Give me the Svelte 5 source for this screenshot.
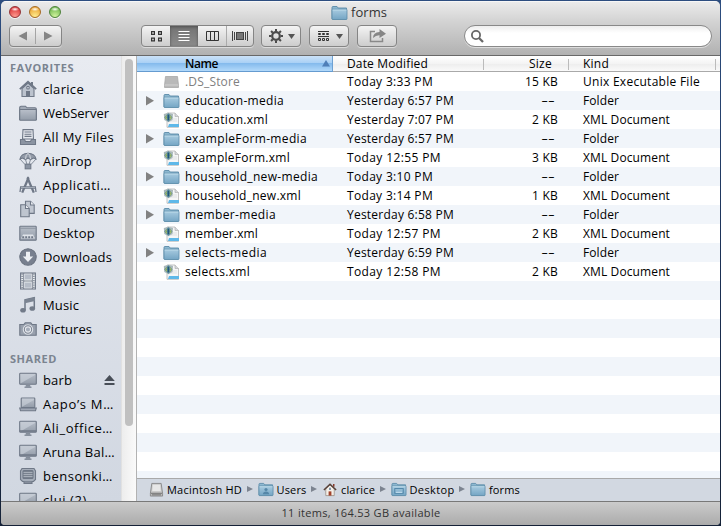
<script>
  const favorites = [
    ['clarice', 'home', 41], ['WebServer', 'folder', 66], ['All My Files', 'files', 71],
    ['AirDrop', 'airdrop', 49], ['Applicati…', 'apps', 68], ['Documents', 'docs', 71],
    ['Desktop', 'desktop', 52], ['Downloads', 'download', 69], ['Movies', 'movies', 43],
    ['Music', 'music', 36], ['Pictures', 'pictures', 49]
  ];
  const shared = [
    ['barb', 'display', 29], ['Aapo’s M…', 'laptop', 71], ['Ali_office…', 'imac', 70],
    ['Aruna Bal…', 'imac', 72], ['bensonki…', 'crt', 70], ['clui (2)', 'display', 44]
  ];
  const files = [
    ['.DS_Store', 55, 'Today 3:33 PM', 86, '15 KB', 33, 'Unix Executable File', 117],
    ['education-media', 99, 'Yesterday 6:57 PM', 107, '--', 14, 'Folder', 36],
    ['education.xml', 83, 'Yesterday 7:07 PM', 107, '2 KB', 26, 'XML Document', 87],
    ['exampleForm-media', 122, 'Yesterday 6:57 PM', 107, '--', 14, 'Folder', 36],
    ['exampleForm.xml', 105, 'Today 12:55 PM', 94, '3 KB', 26, 'XML Document', 87],
    ['household_new-media', 133, 'Today 3:10 PM', 86, '--', 14, 'Folder', 36],
    ['household_new.xml', 116, 'Today 3:14 PM', 86, '1 KB', 26, 'XML Document', 87],
    ['member-media', 91, 'Yesterday 6:58 PM', 107, '--', 14, 'Folder', 36],
    ['member.xml', 73, 'Today 12:57 PM', 94, '2 KB', 26, 'XML Document', 87],
    ['selects-media', 82, 'Yesterday 6:59 PM', 107, '--', 14, 'Folder', 36],
    ['selects.xml', 65, 'Today 12:58 PM', 94, '2 KB', 26, 'XML Document', 87]
  ];
  const blanks = Array.from({ length: 11 });
  const path = [['Macintosh HD', 'hd', 75], ['Users', 'users', 30], ['clarice', 'house', 34], ['Desktop', 'desk', 45], ['forms', 'plain', 31]];

  // Tracks a label in or out so that it fills its intended width.
  function fit(node, width) {
    const natural = node.getBoundingClientRect().width;
    node.style.letterSpacing = `${(width - natural) / node.textContent.length}px`;
  }
</script>

{#snippet blueFolder(kind)}
  <svg class="bf" viewBox="0 0 17 16">
    <path d="M1 14V2.5Q1 1.5 2 1.5H6L7.2 3H15.5V14Z" fill="#8db8d0" stroke="#5b8ba8" stroke-width=".9" />
    <rect x="1" y="4.2" width="15" height="10.3" rx=".7" fill="url(#blue)" stroke="#5b8ba8" stroke-width=".8" />
    <path d="M1.6 5H15.4" stroke="#c5e1ef" stroke-width=".8" />
    {#if kind === 'users'}<circle cx="8.5" cy="8" r="1.7" fill="#5587a8" /><path d="M5.2 13Q5.5 10 8.5 10T11.8 13Z" fill="#5587a8" />{/if}
    {#if kind === 'desk'}<rect x="4" y="7" width="9" height="5" fill="none" stroke="#4d83a6" /><path d="M5 11H12" stroke="#d0e8f5" />{/if}
  </svg>
{/snippet}

{#snippet sideIcon(kind)}
  <svg class="si" viewBox="0 0 18 18" fill="none" stroke="#6f7887" stroke-width="1.1">
    {#if kind === 'home'}
      <path d="M3 8.5V16.5H15V8.5L9 3Z" fill="#bcc3ce" /><path d="M.8 9.2 9 1.8l8.2 7.4" stroke-width="1.8" /><path d="M13 2v4" stroke-width="2" />
      <circle cx="9" cy="7.7" r="1.3" fill="#eef0f4" /><rect x="7" y="11" width="4" height="5.5" fill="#6f7887" stroke="none" />
    {:else if kind === 'folder'}
      <path d="M.7 15.5V3.5Q.7 2.2 2 2.2H6.5L8 3.8H16Q17.3 3.8 17.3 5V15.5Z" fill="#a3abb7" /><rect x=".7" y="5.5" width="16.6" height="10.8" rx=".6" fill="url(#gray)" />
    {:else if kind === 'files'}
      <path d="M3.5 11 4 1.6H14L14.5 11Z" fill="#e6e9ee" /><path d="M5.5 4H12.5M5.5 6.2H12.5M5.5 8.4H12.5" /><path d="M1.5 11.5H5.5L6.5 13.5H11.5L12.5 11.5H16.5V16.5H1.5Z" fill="#8b94a2" />
    {:else if kind === 'airdrop'}
      <path d="M1 7Q2 1.5 9 1.2 16 1.5 17 7L14.5 6 11.5 7.5 9 6 6.5 7.5 3.5 6Z" fill="#929aa7" /><path d="M6.5 7.2Q6.5 3 9 1.2 11.5 3 11.5 7.2" stroke="#e6e9ee" stroke-width=".8" /><path d="M1 7 6 12.5M6.5 7.5 8 12.5M11.5 7.5 10 12.5M17 7 12 12.5" stroke-width=".8" /><rect x="6.2" y="12.2" width="5.6" height="4.6" fill="#8b94a2" />
    {:else if kind === 'apps'}
      <path d="M1 16 1.6 11.5M17 16 16.4 11.5" stroke-width="1.3" /><path d="M3.2 16.6 9 3 14.8 16.6" stroke-width="2.3" /><path d="M1 11.5H17" stroke-width="2.4" /><path d="M2 11.5H16" stroke="#bac1cb" stroke-width=".7" /><circle cx="9" cy="2.5" r="1.4" fill="#6f7887" stroke="none" />
    {:else if kind === 'docs'}
      <path d="M6.5 1.2H11.5L15.2 5V13.4H6.5Z" fill="#c1c7d1" /><path d="M11.5 1.2V5H15.2" fill="#eceff3" /><path d="M1.7 4.7H6.5L10.2 8.5V16.8H1.7Z" fill="#bec5cf" /><path d="M6.5 4.7V8.5H10.2" fill="#f0f2f5" />
    {:else if kind === 'desktop'}
      <rect x=".8" y="2.3" width="16.4" height="14" rx=".6" fill="url(#gray)" /><path d="M1 4.2H17" stroke="#8d95a1" /><path d="M4 10.5H14L16 14.5H2Z" fill="#dfe3e9" stroke="none" /><path d="M3.2 13.2H14.8" stroke-width="2" stroke-dasharray="2 1" />
    {:else if kind === 'download'}
      <circle cx="9" cy="9" r="8.2" fill="#78808f" stroke="#69717f" /><path d="M7 3.8H11V8.5H14.2L9 14 3.8 8.5H7Z" fill="#edf0f4" stroke="none" />
    {:else if kind === 'movies'}
      <rect x="1.6" y="1" width="14.8" height="16" fill="#edf0f3" /><path d="M3.1 1.5V17M14.9 1.5V17" stroke-width="1.3" stroke-dasharray="1.2 1" /><path d="M4.7 1V17M13.3 1V17M4.7 9H13.3" stroke-width=".9" /><rect x="5.8" y="2.3" width="6.4" height="5.2" fill="#b6bdc8" stroke="none" /><rect x="5.8" y="10.5" width="6.4" height="5.2" fill="#b6bdc8" stroke="none" />
    {:else if kind === 'music'}
      <path d="M6 14V3.8L15.3 1.8V12.5" stroke-width="1.5" /><path d="M6 3.4 16 1.2V5L6 7.2Z" fill="#7b8492" stroke="none" /><ellipse cx="4" cy="14.3" rx="2.8" ry="2.3" fill="#727b89" stroke="none" /><ellipse cx="13.3" cy="12.5" rx="2.8" ry="2.3" fill="#727b89" stroke="none" />
    {:else if kind === 'pictures'}
      <path d="M.8 4.5H4.8L6.2 2.8H11.8L13.2 4.5H17.2V15.3H.8Z" fill="#98a0ad" /><circle cx="9" cy="9.5" r="4.7" fill="#7b8391" stroke="#dce0e6" /><circle cx="9" cy="9.5" r="2.6" fill="#a5adba" stroke="#e5e8ed" />
    {:else if kind === 'laptop'}
      <rect x="2.2" y="3" width="13.6" height="9.6" rx=".7" fill="url(#gray)" /><path d="M3 11.8 15 5V3.6H3Z" fill="#ccd2db" stroke="none" opacity=".6" /><path d="M.7 13H17.3L16.5 15.7H1.5Z" fill="#9fa7b4" />
    {:else if kind === 'crt'}
      <path d="M3 1.5H15L16.5 4V12.5L14.5 14.5H3.5L1.5 12.5V4Z" fill="#a5adb9" /><rect x="4" y="3.5" width="10" height="8" rx="1" fill="#79828f" /><path d="M4.5 5.5H13.5M4.5 7.5H13.5M4.5 9.5H13.5" stroke="#c6ccd5" stroke-width=".6" /><path d="M5 14.5V16.4H13V14.5" fill="#8e96a3" />
    {:else}
      <rect x=".7" y="2.2" width="16.6" height="11" rx=".8" fill="url(#gray)" /><path d="M1.4 12.4 16 4V2.9H1.4Z" fill="#cdd3dc" stroke="none" opacity=".65" />
      {#if kind === 'imac'}<path d="M.7 12H17.3" stroke-width="1.5" />{/if}
      <path d="M7 13.5H11L11.5 15.7H6.5Z" fill="#858e9b" stroke="none" /><path d="M5.5 16.2H12.5" />
    {/if}
  </svg>
{/snippet}

{#snippet houseIcon()}
  <svg class="bf" viewBox="0 0 17 16"><path d="M4 7V14.5H13V7L8.5 3Z" fill="#f4efe8" stroke="#8b7d72" stroke-width=".7" /><path d="M12.5 2V5" stroke="#8a3c2d" stroke-width="1.6" /><path d="M2 8.5 8.5 2.4 15 8.5" fill="none" stroke="#574139" stroke-width="1.7" /><path d="M7 10H10V14.5H7Z" fill="#a0422b" /><path d="M8.5 6.2V8.5" stroke="#4c7393" stroke-width="1.5" /></svg>
{/snippet}

<svg class="defs" width="0" height="0">
  <defs>
    <linearGradient id="blue" x2="0" y2="1"><stop stop-color="#a8cbe0" /><stop offset="1" stop-color="#74a5c4" /></linearGradient>
    <linearGradient id="gray" x2="0" y2="1"><stop stop-color="#b9c0ca" /><stop offset="1" stop-color="#929ba8" /></linearGradient>
  </defs>
</svg>

<div class="screen">
  <div class="window">
    <header>
      <div class="titlebar">
        <div class="lights"><i class="red"></i><i class="amber"></i><i class="green"></i></div>
        <div class="title">{@render blueFolder()}<span use:fit={36}>forms</span></div>
      </div>
      <div class="tools">
        <div class="btn nav">
          <svg viewBox="0 0 51 20"><path d="M17 5.5V14.5L8.5 10ZM34 5.5V14.5L42.5 10Z" fill="#858585" /><path d="M25.5 2V18" stroke="#a4a4a4" /></svg>
        </div>
        <div class="btn views">
          <div><svg viewBox="0 0 28 20" fill="none" stroke="#333" stroke-width="1.2"><path d="M9.6 5.6H12.4V8.4H9.6ZM16.6 5.6H19.4V8.4H16.6ZM9.6 12.1H12.4V14.9H9.6ZM16.6 12.1H19.4V14.9H16.6Z" /></svg></div>
          <div class="on"><svg viewBox="0 0 28 20" stroke="#fff"><path d="M8.5 5.5H19.5M8.5 8.5H19.5M8.5 11.5H19.5M8.5 14.5H19.5" /></svg></div>
          <div><svg viewBox="0 0 28 20" fill="none" stroke="#333"><path d="M8.5 5.5H20.5V14.5H8.5ZM12.5 5.5V14.5M16.5 5.5V14.5" /></svg></div>
          <div class="flow"><svg viewBox="0 0 28 20" fill="none" stroke="#444"><rect x="9.5" y="6.5" width="7" height="7" fill="#777" /><path d="M5.5 5V15M7.5 6V14M18.5 6V14M20.5 5V15" /></svg></div>
        </div>
        <div class="btn gear">
          <svg viewBox="0 0 38 20"><circle cx="14" cy="10" r="3.8" fill="none" stroke="#4c4c4c" stroke-width="2.2" /><path d="M14 3V5.4M14 14.6V17M7 10H9.4M18.6 10H21M9.05 5.05 10.8 6.8M17.2 13.2 18.95 14.95M9.05 14.95 10.8 13.2M17.2 6.8 18.95 5.05" stroke="#4c4c4c" stroke-width="2" /><path d="M26 8H33L29.5 13Z" fill="#555" /></svg>
        </div>
        <div class="btn arrange">
          <svg viewBox="0 0 38 20" fill="none" stroke="#333"><path d="M8 5.5H19M8 10.5H19" /><path d="M8.5 7.5H10.5V8.5H8.5ZM12.5 7.5H14.5V8.5H12.5ZM16.5 7.5H18.5V8.5H16.5ZM8.5 12.5H10.5V14.5H8.5ZM12.5 12.5H14.5V14.5H12.5ZM16.5 12.5H18.5V14.5H16.5Z" /><path d="M26 8H33L29.5 13Z" fill="#555" stroke="none" /></svg>
        </div>
        <div class="btn share">
          <svg viewBox="0 0 38 20"><path d="M17 5.5H12.5V15.5H24.5V12" fill="none" stroke="#898989" stroke-width="1.5" /><path d="M15 12Q15 6.3 21.5 6V3L28 7.8 21.5 12V9.2Q18 9 15 12Z" fill="#868686" /></svg>
        </div>
        <div class="search"><svg viewBox="0 0 20 20" fill="none" stroke="#686868"><circle cx="9" cy="9" r="4.1" stroke-width="1.8" /><path d="M12 12 16 16" stroke-width="2.3" /></svg></div>
      </div>
    </header>

    <main>
      <aside>
        <nav>
          <h2 class="first"><span use:fit={64}>FAVORITES</span></h2>
          {#each favorites as [label, icon, width]}
            <div class="place">{@render sideIcon(icon)}<span use:fit={width}>{label}</span></div>
          {/each}
          <h2><span use:fit={47}>SHARED</span></h2>
          {#each shared as [label, icon, width]}
            <div class="place">{@render sideIcon(icon)}<span use:fit={width}>{label}</span>
              {#if label === 'barb'}<svg class="eject" viewBox="0 0 11 11" fill="#484e57"><path d="M5.5 0 10.8 6H.2ZM.5 8H10.5V10H.5Z" /></svg>{/if}
            </div>
          {/each}
        </nav>
        <div class="gutter"><div class="thumb"></div></div>
      </aside>

      <section>
        <div class="heads">
          <div class="name"><b use:fit={33}>Name</b><svg viewBox="0 0 8 7"><path d="M4 0 8 6.5H0Z" fill="#4f7fb8" /></svg></div>
          <div class="date"><span use:fit={81}>Date Modified</span></div>
          <div class="size"><span use:fit={23}>Size</span></div>
          <div class="kind"><span use:fit={26}>Kind</span></div>
        </div>
        <div class="list">
          {#each files as [name, nw, date, dw, size, sw, kind, kw], i}
            <div class="row">
              <div class="tri">{#if kind === 'Folder'}<svg viewBox="0 0 8 10"><path d="M0 0 8 4.7 0 9.4Z" fill="#828282" /></svg>{/if}</div>
              <div class="ico">
                {#if kind === 'Folder'}
                  {@render blueFolder()}
                {:else if i === 0}
                  <svg class="bf" viewBox="0 0 17 16"><path d="M2.5 2.5H14.5L15.5 11.5V13.5H1.5V11.5Z" fill="#b9b9b9" stroke="#a8a8a8" stroke-width=".8" /><path d="M2 11H15" stroke="#d2d2d2" /></svg>
                {:else}
                  <svg class="bf" viewBox="0 0 17 16"><path d="M4 1H12L15.5 4.5V15.3H4Z" fill="#f5f6f7" stroke="#aaa" stroke-width=".7" /><path d="M12 1V4.5H15.5" fill="#d5d8db" stroke="#aaa" stroke-width=".6" /><path d="M6 7H14M6 9H14" stroke="#d8d8d8" stroke-width=".7" /><path d="M6 12H16V15H5Z" fill="#5eb8e9" /><path d="M.8 2 5.4 .8 10 2 9.5 8 5.4 10.2 1.3 8Z" fill="#a9b8ba" /><path d="M1.3 5.5 5.4 1.2 9.5 5.5 5.4 9.7Z" fill="#4c8299" /><path d="M4 3.5 2.6 5.4 4 7.4M6.8 3.5 8.2 5.4 6.8 7.4" fill="none" stroke="#a8bd62" stroke-width="1.1" /><path d="M5.4 3V8" stroke="#235479" stroke-width="1.2" /></svg>
                {/if}
              </div>
              <div class="c-name" class:dim={i === 0}><span use:fit={nw}>{name}</span></div>
              <div class="c-date"><span use:fit={dw}>{date}</span></div>
              <div class="c-size">{#if size === '--'}<span class="none">{size}</span>{:else}<span use:fit={sw}>{size}</span>{/if}</div>
              <div class="c-kind"><span use:fit={kw}>{kind}</span></div>
            </div>
          {/each}
          {#each blanks as _}<div class="row"></div>{/each}
        </div>
        <div class="path">
          {#each path as [label, icon, width], i}
            {#if i}<svg class="sep" viewBox="0 0 6 6"><path d="M0 0 6 3 0 6Z" fill="#7d8490" /></svg>{/if}
            <div class="crumb">
              {#if icon === 'hd'}<svg class="bf" viewBox="0 0 17 16"><path d="M4 1.5H14L15.5 12V15H2.5V12Z" fill="#c9c9c9" stroke="#777" stroke-width=".8" /><path d="M5 3H13L13.5 9.5H4.5Z" fill="#e7e7e7" /><path d="M3 12H15M4 13.7H14" stroke="#666" stroke-width="1" /></svg>
              {:else if icon === 'house'}{@render houseIcon()}
              {:else}{@render blueFolder(icon)}{/if}
              <span use:fit={width}>{label}</span>
            </div>
          {/each}
        </div>
      </section>
    </main>
    <footer><span use:fit={159}>11 items, 164.53 GB available</span></footer>
  </div>
</div>

<style>
  .defs { position: absolute; }
  .screen { width: 721px; height: 526px; box-sizing: border-box; padding: 1px; background: linear-gradient(#2d4e80, #1b3055 50%, #152238); font: 500 12px/19px "Open Sans", "Noto Sans", sans-serif; color: #000; overflow: hidden; }
  .screen * { box-sizing: border-box; }
  span, b { white-space: nowrap; }
  svg { display: block; flex: none; }
  .window { width: 719px; height: 524px; border-radius: 5px 5px 4px 4px; overflow: hidden; display: flex; flex-direction: column; background: #bbb; }
  header { height: 55px; background: linear-gradient(#ebebeb, #d4d4d4 35%, #b1b1b1); border-top: 1px solid #f7f7f7; border-bottom: 1px solid #686868; flex: none; }
  .titlebar { height: 23px; display: flex; }
  .lights { display: flex; gap: 8px; padding: 4px 0 0 8px; }
  .lights i { width: 12px; height: 12px; border-radius: 50%; border: 1px solid; box-shadow: 0 1px 0 #f4f4f4; }
  .red { background: radial-gradient(ellipse 4px 2px at 50% 22%, #fff, #fff0), radial-gradient(circle at 50% 95%, #ff9d92, #dc3a3c 80%); border-color: #923336 !important; }
  .amber { background: radial-gradient(ellipse 4px 2px at 50% 22%, #fff, #fff0), radial-gradient(circle at 50% 95%, #ffef91, #eba637 80%); border-color: #a66b24 !important; }
  .green { background: radial-gradient(ellipse 4px 2px at 50% 22%, #fff, #fff0), radial-gradient(circle at 50% 95%, #d3f5a0, #74b953 80%); border-color: #4e823b !important; }
  .title { display: flex; align-items: center; gap: 3px; padding-left: 270px; font-size: 13px; color: #333; height: 21px; }
  .bf { width: 17px; height: 16px; }
  .tools { display: flex; padding-left: 8px; height: 22px; }
  .btn { height: 22px; border: 1px solid #858585; border-radius: 4px; background: linear-gradient(#f4f4f4, #dedede 55%, #cdcdcd); box-shadow: 0 1px 0 #dadada; flex: none; overflow: hidden; }
  .btn svg { height: 20px; width: 100%; }
  .nav { width: 53px; }
  .views { width: 113px; margin-left: 79px; display: flex; }
  .views div { width: 28px; }
  .views div svg { width: 28px; }
  .views .on { background: linear-gradient(#737373, #8b8b8b); box-shadow: inset 0 1px 3px #505050; }
  .views .flow { border-left: 1px solid #aaa; width: 27px; }
  .gear, .arrange, .share { width: 40px; margin-left: 8px; }
  .gear { margin-left: 7px; }
  .search { width: 248px; height: 22px; margin-left: 67px; border: 1px solid #898989; border-radius: 11px; background: linear-gradient(#eee, #fff 35%); box-shadow: 0 1px 0 #ddd; }
  .search svg { width: 20px; height: 20px; margin-left: 2px; }
  main { display: flex; height: 445px; flex: none; }
  aside { width: 135px; display: flex; flex: none; overflow: hidden; background: linear-gradient(#e8ebf1, #d1d7e1); }
  nav { width: 120px; overflow: hidden; }
  h2 { margin: 10px 0 2px; height: 15px; padding-left: 9px; font: bold 11px/15px "Open Sans", sans-serif; color: #7b8490; }
  h2.first { margin: 4px 0 2px; }
  .place { height: 24px; display: flex; align-items: center; padding-left: 18px; gap: 6px; font-size: 13px; }
  .si { width: 18px; height: 18px; }
  .eject { width: 11px; height: 11px; margin-left: 26px; }
  .gutter { width: 15px; background: linear-gradient(90deg, #ededed, #fafafa); border-left: 1px solid #e1e1e1; padding: 3px 3px; }
  .thumb { width: 8px; height: 367px; border-radius: 4px; background: #c0c0c0; }
  section { flex: 1; border-left: 1px solid #b2b2b2; display: flex; flex-direction: column; background: #fff; }
  .heads { height: 16px; display: flex; border-bottom: 1px solid #a9a9a9; background: linear-gradient(#fff, #f4f4f4 50%, #ededed 51%, #fafafa); line-height: 15px; flex: none; }
  .name { width: 196px; height: 16px; padding-left: 48px; display: flex; align-items: center; background: linear-gradient(#cbe2f8, #a8d0f5 48%, #85bbed 50%, #b2d9fa); border-bottom: 1px solid #659bd0; border-right: 1px solid #6ea1d2; }
  .name svg { width: 8px; height: 7px; margin-left: 104px; }
  .name b { font-weight: 600; }
  .date { width: 151px; padding-left: 14px; }
  .size { width: 85px; padding-right: 17px; text-align: right; }
  .date, .size, .kind { background: linear-gradient(#bbb, #bbb) right 3px / 1px 11px no-repeat; }
  .kind { width: 147px; padding-left: 14px; }
  .list { height: 406px; overflow: hidden; flex: none; }
  .row { height: 19px; display: flex; align-items: center; }
  .row:nth-child(even) { background: #f1f5fa; }
  .tri { width: 26px; padding-left: 9px; }
  .tri svg { width: 8px; height: 10px; }
  .ico { width: 22px; }
  .c-name { width: 162px; }
  .c-date { width: 120px; }
  .c-size { width: 91px; text-align: right; }
  .none { display: inline-block; transform: scaleX(1.75); transform-origin: right; margin-right: 3px; }
  .c-kind { padding-left: 25px; }
  .dim { color: #808080; }
  .path { height: 23px; border-top: 1px solid #a9a9a9; background: #d2d8e1; display: flex; align-items: center; padding: 0 0 2px 11px; font-size: 11px; flex: none; }
  .crumb { display: flex; align-items: center; gap: 3px; }
  .path .bf { width: 16px; height: 15px; }
  .sep { width: 6px; height: 6px; margin: 0 5px 0 4.5px; }
  footer { height: 24px; flex: none; border-top: 1px solid #787878; background: linear-gradient(#cbcbcb, #ababab); text-align: center; line-height: 22px; font-size: 11px; color: #333; padding-left: 1px; }
</style>
